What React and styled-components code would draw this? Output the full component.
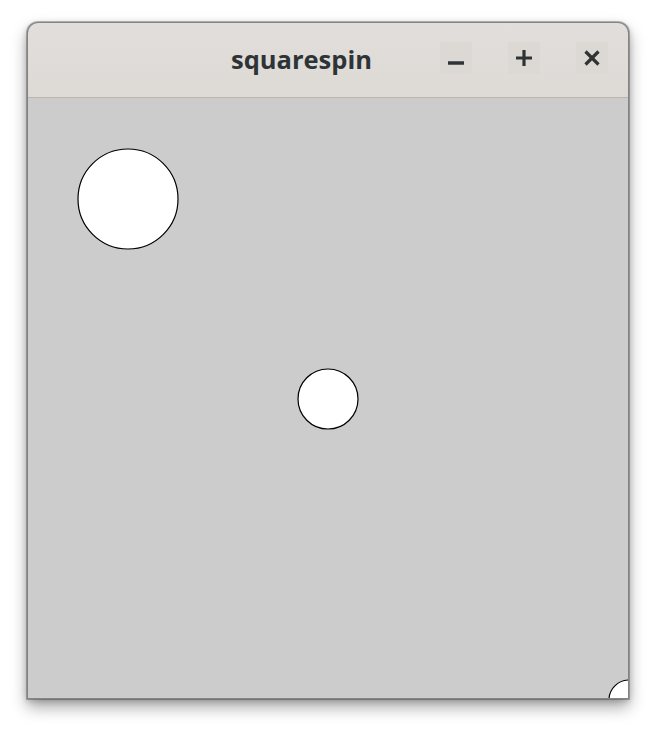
import React from 'react';
import styled, { createGlobalStyle } from 'styled-components';

const GlobalStyle = createGlobalStyle`
  html, body {
    margin: 0;
    background: #ffffff;
  }
`;

const Page = styled.div`
  padding: 22px 0 34px 27px;
`;

const Window = styled.div`
  width: 602px;
  border-radius: 11px 11px 0 0;
  box-shadow: 0 0 0 1px rgba(0, 0, 0, 0.25), 0 8px 16px rgba(0, 0, 0, 0.35),
    0 2px 6px rgba(0, 0, 0, 0.2);
  background: #848484;
  overflow: hidden;
`;

const TitleBar = styled.div`
  display: flex;
  align-items: center;
  height: 74px;
  margin: 1px 1px 0 1px;
  border-radius: 10px 10px 0 0;
  border-bottom: 1px solid #bdb6af;
  background: linear-gradient(#e1dedb, #dddad6);
  padding: 0 20px 0 203px;
`;

const Title = styled.div`
  margin-right: auto;
  margin-top: -2px;
  font-family: 'Open Sans', sans-serif;
  font-weight: 700;
  font-size: 25.5px;
  color: #2e3436;
`;

const Buttons = styled.div`
  display: flex;
  gap: 36px;
  margin-top: -4px;
`;

const WinButton = styled.div`
  width: 32px;
  height: 32px;
  display: flex;
  align-items: center;
  justify-content: center;
  background: #dcd9d5;
`;

const Canvas = styled.div`
  margin: 0 1px 1px 1px;
  width: 600px;
  height: 600px;
  background: #cccccc;
  overflow: hidden;
`;

const Icon = ({ children }) => (
  <svg width="18" height="18" viewBox="0 0 18 18" fill="none" stroke="#2e3436" strokeWidth="3.2">
    {children}
  </svg>
);

export default function App() {
  return (
    <>
      <GlobalStyle />
      <Page>
        <Window>
          <TitleBar>
            <Title>squarespin</Title>
            <Buttons>
              <WinButton>
                <Icon>
                  <line x1="1" y1="14" x2="17" y2="14" strokeWidth="3.6" />
                </Icon>
              </WinButton>
              <WinButton>
                <Icon>
                  <line x1="1" y1="9" x2="17" y2="9" />
                  <line x1="9" y1="1" x2="9" y2="17" />
                </Icon>
              </WinButton>
              <WinButton>
                <Icon>
                  <line x1="2.5" y1="2.5" x2="15.5" y2="15.5" />
                  <line x1="15.5" y1="2.5" x2="2.5" y2="15.5" />
                </Icon>
              </WinButton>
            </Buttons>
          </TitleBar>
          <Canvas>
            <svg width="600" height="600" viewBox="0 0 600 600">
              <circle cx="100" cy="101" r="50" fill="#fff" stroke="#000" strokeWidth="1.2" />
              <circle cx="300" cy="301" r="30" fill="#fff" stroke="#000" strokeWidth="1.2" />
              <circle cx="601" cy="602" r="20" fill="#fff" stroke="#000" strokeWidth="1.2" />
            </svg>
          </Canvas>
        </Window>
      </Page>
    </>
  );
}
